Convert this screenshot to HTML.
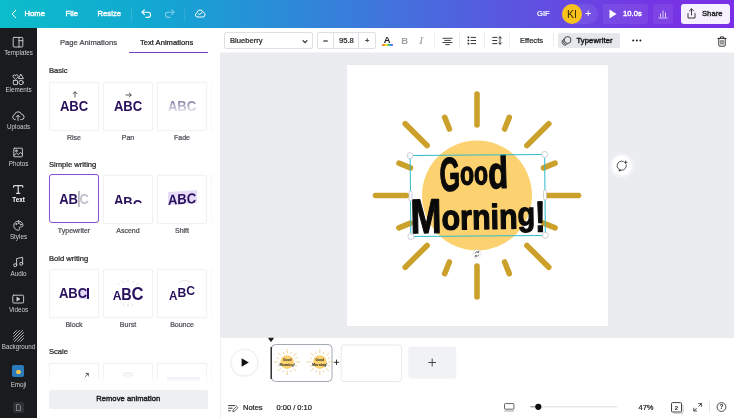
<!DOCTYPE html>
<html lang="en">
<head>
<meta charset="utf-8">
<title>Good Morning - Text Animations</title>
<style>
*{box-sizing:border-box;margin:0;padding:0}
html,body{width:734px;height:418px;overflow:hidden;background:#fff}
body{font-family:"Liberation Sans","DejaVu Sans",sans-serif;position:relative;will-change:transform;color:#1c1c1e;-webkit-font-smoothing:antialiased}
.abs{position:absolute}
svg{position:absolute;overflow:visible}
/* header */
#hdr{left:0;top:0;width:734px;height:28px;background:linear-gradient(90deg,#0bbdca 0%,#13a6d2 22%,#3a7cdb 48%,#5b55e0 70%,#7436e4 88%,#7a2fe6 100%)}
#hdr .t{position:absolute;color:#fff;font-size:7.600px;font-weight:normal;-webkit-text-stroke:.4px currentColor;letter-spacing:.05px;top:9px;line-height:10px;white-space:nowrap}
/* sidebar */
#side{left:0;top:28px;width:36.500px;height:390px;background:#1a1b1e}
#side .l{position:absolute;left:0;width:37px;text-align:center;color:#cfd0d3;font-size:6.300px;line-height:8px;white-space:nowrap}
/* panel */
#panel{left:37px;top:28px;width:183px;height:390px;background:#fff;overflow:hidden}
.tab{position:absolute;top:9.500px;font-size:7.6px;line-height:10px;white-space:nowrap;color:#44464c}
.h{position:absolute;left:12px;font-size:7.6px;line-height:10px;color:#1d1e22;white-space:nowrap}
.card{position:absolute;width:50px;height:49px;border:1px solid #f2f2f5;box-shadow:0 0 1.500px rgba(20,20,40,.05);border-radius:2px;background:#fff}
.card .ar{position:absolute;left:0;width:48px;text-align:center;top:7px;font-size:7px;line-height:8px;font-style:normal;color:#333;font-family:'DejaVu Sans','Liberation Sans',sans-serif}
.card b{position:absolute;left:0;width:48px;text-align:center;top:15.300px;font-size:14.500px;line-height:16px;color:#28105c;letter-spacing:-.1px;font-weight:bold;white-space:nowrap;transform:scaleX(.9)}
.lab{position:absolute;width:50px;text-align:center;font-size:7px;line-height:8px;color:#4b4d54;white-space:nowrap}
/* toolbar */
#tool{left:220px;top:28px;width:514px;height:24px;background:#fff}
.box{position:absolute;top:4px;height:16.500px;border:1px solid #dfe0e5;border-radius:2px;background:#fff}
.tt{position:absolute;font-size:7.600px;line-height:10px;top:7.500px;white-space:nowrap;color:#1d1e22}
.dv{position:absolute;top:5px;width:1px;height:14px;background:#ebecef}
/* stage */
#stage{left:220px;top:52px;width:514px;height:286px;background:#ebecf0;border-top:1px solid #f5f5f8}
#pagec{left:347px;top:65px;width:261px;height:260.500px;background:#fff;box-shadow:0 0 1.500px rgba(30,30,60,.04)}
/* bottom */
#tl{left:220px;top:338px;width:514px;height:80px;background:#fff}
.ft{position:absolute;font-size:7.5px;line-height:10px;top:403.200px;white-space:nowrap;color:#1d1e22}
.tt,.tab,.h,.ft,.lab{-webkit-text-stroke:.22px currentColor}
</style>
</head>
<body>

<!-- ================= HEADER ================= -->
<div id="hdr" class="abs">
  <svg style="left:11px;top:9px" width="6" height="10" viewBox="0 0 6 10"><path d="M4.800 1.200 L1.200 5 L4.800 8.800" fill="none" stroke="#fff" stroke-width="1" stroke-linecap="round" stroke-linejoin="round"/></svg>
  <span class="t" style="left:24.500px">Home</span>
  <span class="t" style="left:65.500px">File</span>
  <span class="t" style="left:97.500px">Resize</span>
  <div class="abs" style="left:131px;top:7px;width:1px;height:14px;background:rgba(255,255,255,.14)"></div>
  <!-- undo -->
  <svg style="left:141px;top:9px" width="11" height="9" viewBox="0 0 11 9"><path d="M3.4 0.8 L0.9 3.2 L3.4 5.6 M1 3.2 H7 a2.6 2.6 0 0 1 0 5.2 H5" fill="none" stroke="#fff" stroke-width="1.1" stroke-linecap="round" stroke-linejoin="round"/></svg>
  <!-- redo -->
  <svg style="left:164px;top:9px;opacity:.45" width="11" height="9" viewBox="0 0 11 9"><path d="M7.6 0.8 L10.1 3.2 L7.6 5.6 M10 3.2 H4 a2.6 2.6 0 0 0 0 5.2 H6" fill="none" stroke="#fff" stroke-width="1.1" stroke-linecap="round" stroke-linejoin="round"/></svg>
  <div class="abs" style="left:184px;top:7px;width:1px;height:14px;background:rgba(255,255,255,.10)"></div>
  <!-- cloud -->
  <svg style="left:194px;top:8px" width="12" height="10" viewBox="0 0 12 10"><path d="M3.2 9 H8.8 a2.4 2.4 0 0 0 .5 -4.7 a3.3 3.3 0 0 0 -6.4 .5 a2.2 2.2 0 0 0 .3 4.2 Z" fill="none" stroke="#fff" stroke-width="1"/><path d="M4.4 5.6 L5.6 6.8 L7.8 4.4" fill="none" stroke="#fff" stroke-width="1" stroke-linecap="round" stroke-linejoin="round"/></svg>

  <span class="t" style="left:537px;-webkit-text-stroke:.2px currentColor">GIF</span>
  <div class="abs" style="left:561px;top:4px;width:37px;height:20px;border-radius:10px;background:rgba(255,255,255,.08)"></div>
  <div class="abs" style="left:562px;top:4px;width:20px;height:20px;border-radius:10px;background:#f7c21b;color:#3a2a05;font-size:10.500px;line-height:20px;text-align:center">KI</div>
  <span class="t" style="left:585px;top:8px;font-size:11px;-webkit-text-stroke:0">+</span>
  <div class="abs" style="left:603px;top:4px;width:45px;height:20px;border-radius:3px;background:rgba(255,255,255,.07)"></div>
  <svg style="left:609px;top:9px" width="8" height="10" viewBox="0 0 8 10"><path d="M0.5 0.6 L7.5 5 L0.5 9.4 Z" fill="#fff"/></svg>
  <span class="t" style="left:623px">10.0s</span>
  <div class="abs" style="left:653px;top:4px;width:20px;height:20px;border-radius:3px;background:rgba(255,255,255,.07)"></div>
  <svg style="left:658px;top:9px" width="10" height="10" viewBox="0 0 10 10"><path d="M2.5 8 V4.5 M5 8 V1.5 M7.5 8 V3.5 M0.5 9 H9.5" fill="none" stroke="#e9defc" stroke-width="0.9"/></svg>
  <div class="abs" style="left:681px;top:4px;width:49px;height:20px;border-radius:3px;background:#f6f1fe"></div>
  <svg style="left:687px;top:8px" width="9" height="11" viewBox="0 0 9 11"><path d="M4.5 7 V1 M2.4 2.9 L4.5 0.8 L6.6 2.9 M1 5.5 V10 H8 V5.5" fill="none" stroke="#222" stroke-width="0.9" stroke-linecap="round" stroke-linejoin="round"/></svg>
  <span class="t" style="left:702px;color:#1f2024">Share</span>
</div>

<!-- ================= SIDEBAR ================= -->
<div id="side" class="abs">
  <svg style="left:0;top:0" width="37" height="390" viewBox="0 28 37 390" fill="none" stroke="#d6d7da" stroke-width="0.9" stroke-linecap="round" stroke-linejoin="round">
    <!-- templates -->
    <rect x="13.2" y="37.4" width="9.6" height="9.6" rx="0.8"/><path d="M19 37.400 V47 M19 40.700 H22.800"/>
    <!-- elements -->
    <path d="M15.6 75.4 c-.7 -1.2 -2.6 -.6 -2.6 .8 c0 1.300 1.7 2.300 2.600 3.100 c.9 -.8 2.600 -1.800 2.600 -3.100 c0 -1.400 -1.900 -2 -2.600 -.8z"/>
    <path d="M21.100 74.400 L23.400 78.600 H18.800 Z"/>
    <rect x="13.300" y="80.400" width="4.200" height="4.200" rx="0.500"/><circle cx="21.100" cy="82.500" r="2.200"/>
    <!-- uploads -->
    <path d="M15.400 119.600 H14.900 a2.500 2.500 0 0 1 -.3 -4.900 a3.600 3.600 0 0 1 7 -.3 a2.600 2.600 0 0 1 -.2 5.200 H20.600"/>
    <path d="M18 120.400 V115.400 M16.200 117 L18 115.200 L19.800 117"/>
    <!-- photos -->
    <rect x="13.800" y="148.200" width="8.600" height="8.600" rx="0.600"/><circle cx="16.300" cy="150.800" r="0.900"/><path d="M13.900 155.600 L16.600 153 L18.300 154.600 L20.400 152.300 L22.300 154.300"/>
    <!-- text -->
    <path d="M13.600 187.200 V185.700 H22.800 V187.200 M18.200 185.700 V193.300 M16.500 193.300 H19.900" stroke="#fff" stroke-width="1"/>
    <!-- styles -->
    <path d="M18.400 221 a4.600 4.600 0 1 0 0 9.200 c1.300 0 1.500 -1 1 -1.700 c-.5 -.8 0 -1.600 1 -1.600 h1 c1 0 1.600 -.6 1.600 -1.600 a4.500 4.500 0 0 0 -4.600 -4.300z"/><circle cx="16.200" cy="224" r="0.500"/><circle cx="18.600" cy="223" r="0.500"/><circle cx="20.800" cy="224.400" r="0.500"/>
    <!-- audio -->
    <path d="M16.600 265 V258.600 L22.600 257.300 V263.600"/><circle cx="15.200" cy="265.200" r="1.500"/><circle cx="21.200" cy="263.800" r="1.500"/>
    <!-- videos -->
    <rect x="12.800" y="295.200" width="10.800" height="7.800" rx="0.900"/><path d="M17 297.300 L20 299.100 L17 300.900 Z" fill="#d6d7da" stroke-width="0.500"/>
    <!-- background -->
    <path d="M13.500 333.500 L16.500 330.500 M13.500 336.500 L19.500 330.500 M13.500 339.500 L22.500 330.500 M14.500 341.500 L23.500 332.500 M17.500 341.500 L23.500 335.500 M20.500 341.500 L23.500 338.500" stroke-width="0.800"/>
  </svg>
  <div class="abs" style="left:12px;top:337.300px;width:12px;height:11.800px;border-radius:2px;background:#2b7bbb"></div>
  <div class="abs" style="left:15.500px;top:341.500px;width:5px;height:4px;border-radius:2px;background:#f3c64a"></div>
  <div class="abs" style="left:13px;top:373.500px;width:10.500px;height:11.500px;border-radius:2px;background:#2e3035"></div>
  <svg style="left:16px;top:376px" width="5" height="7" viewBox="0 0 5 7"><path d="M0.500 0.500 H3 L4.500 2 V6.500 H0.500 Z" fill="none" stroke="#9fa1a8" stroke-width="0.700"/></svg>
  <span class="l" style="top:21px">Templates</span>
  <span class="l" style="top:58px">Elements</span>
  <span class="l" style="top:94.500px">Uploads</span>
  <span class="l" style="top:131.500px">Photos</span>
  <span class="l" style="top:168px;color:#fff;font-weight:bold">Text</span>
  <span class="l" style="top:204.500px">Styles</span>
  <span class="l" style="top:241.500px">Audio</span>
  <span class="l" style="top:278px">Videos</span>
  <span class="l" style="top:315px">Background</span>
  <span class="l" style="top:352.800px">Emoji</span>
</div>

<!-- ================= PANEL ================= -->
<div id="panel" class="abs">
  <span class="tab" style="left:23px">Page Animations</span>
  <span class="tab" style="left:103px;color:#15161a">Text Animations</span>
  <div class="abs" style="left:92px;top:23.500px;width:79px;height:1.500px;background:#7a3fc4"></div>

  <span class="h" style="top:38px">Basic</span>
  <div class="card" style="left:12px;top:53.500px"><svg style="left:21.500px;top:8px" width="6" height="7" viewBox="0 0 6 7"><path d="M3 6.400 V0.800 M0.900 2.900 L3 0.700 L5.100 2.900" stroke="#2a2b30" stroke-width="0.800" fill="none"/></svg><b>ABC</b></div>
  <div class="card" style="left:66px;top:53.500px"><svg style="left:21px;top:9px" width="7" height="6" viewBox="0 0 7 6"><path d="M0.600 3 H6.200 M4.100 0.900 L6.300 3 L4.100 5.100" stroke="#2a2b30" stroke-width="0.800" fill="none"/></svg><b>ABC</b></div>
  <div class="card" style="left:120px;top:53.500px"><b>ABC</b><div class="abs" style="left:4px;top:15px;width:40px;height:20px;background:linear-gradient(180deg,rgba(255,255,255,.5) 22%,rgba(255,255,255,.97) 76%)"></div></div>
  <div class="card" style="left:174px;top:53.500px"></div>
  <span class="lab" style="left:12px;top:106px">Rise</span>
  <span class="lab" style="left:66px;top:106px">Pan</span>
  <span class="lab" style="left:120px;top:106px">Fade</span>

  <span class="h" style="top:132px">Simple writing</span>
  <div class="card" style="left:12px;top:146.300px;border:1.500px solid #8a4fd0;border-radius:3px"><b style="left:-.5px;top:15.500px">AB<span style="color:#c4c2cd;border-left:.7px solid #6d6a78;margin-left:.6px;padding-left:.3px">C</span></b></div>
  <div class="card" style="left:66px;top:146.800px"><div class="abs" style="left:0;top:0;width:48px;height:28.500px;overflow:hidden"><b><span style="position:relative;top:1px">A</span><span style="position:relative;top:3px">B</span><span style="position:relative;top:5.500px">C</span></b></div></div>
  <div class="card" style="left:120px;top:146.800px"><div class="abs" style="left:10px;top:15.500px;width:29px;height:13px;background:#e6dcf8;transform:skewY(-4deg)"></div><b style="transform:skewY(-4deg) scaleX(.9);top:15px">ABC</b></div>
  <div class="card" style="left:174px;top:146.800px"></div>
  <span class="lab" style="left:12px;top:199px">Typewriter</span>
  <span class="lab" style="left:66px;top:199px">Ascend</span>
  <span class="lab" style="left:120px;top:199px">Shift</span>

  <span class="h" style="top:225.500px">Bold writing</span>
  <div class="card" style="left:12px;top:240.800px"><div class="abs" style="left:29px;top:19px;width:8px;height:10px;background:#e3d8f8"></div><b style="left:-1px">ABC</b><div class="abs" style="left:36.500px;top:18.500px;width:2px;height:10.500px;background:#2c0b66"></div></div>
  <div class="card" style="left:66px;top:240.800px">
    <svg style="left:0;top:0" width="48" height="47" viewBox="0 0 48 47"><path d="M24 9 V12 M18 10.500 L19.500 13 M30 10.500 L28.500 13 M13.500 13.500 L15.500 15 M34.500 13.500 L32.500 15 M24 37 V34 M19 35.500 L20 33.500 M29 35.500 L28 33.500" stroke="#c9c8d2" stroke-width="0.600" fill="none"/></svg>
    <b style="top:16.500px;letter-spacing:-.2px"><span style="font-size:13.500px">A</span><span style="font-size:16px">B</span><span style="font-size:18.500px">C</span></b></div>
  <div class="card" style="left:120px;top:240.800px">
    <svg style="left:0;top:0" width="48" height="47" viewBox="0 0 48 47"><path d="M21 12.500 Q27 8.500 33.500 12.500" stroke="#b8a98a" stroke-width="0.700" stroke-dasharray="0.800 1.200" fill="none"/></svg>
    <b style="letter-spacing:0"><span style="position:relative;top:2px;font-size:13px">A</span><span style="position:relative;top:-1.500px;font-size:13.500px">B</span><span style="position:relative;top:-3.500px;font-size:13.500px">C</span></b></div>
  <div class="card" style="left:174px;top:240.800px"></div>
  <span class="lab" style="left:12px;top:293px">Block</span>
  <span class="lab" style="left:66px;top:293px">Burst</span>
  <span class="lab" style="left:120px;top:293px">Bounce</span>

  <span class="h" style="top:319px">Scale</span>
  <div class="card" style="left:12px;top:334.500px"><svg style="left:33.500px;top:9.500px" width="5" height="5" viewBox="0 0 5 5"><path d="M0.600 4.400 L4.300 0.700 M1.600 0.600 H4.400 V3.400" stroke="#222" stroke-width="0.800" fill="none"/></svg></div>
  <div class="card" style="left:66px;top:334.500px"><svg style="left:17px;top:7.500px" width="14" height="8" viewBox="0 0 14 8"><path d="M2 3 Q7 0 12 3 M1 5 Q7 2.500 13 5 M3 6.500 Q7 5 11 6.500" stroke="#dedde4" stroke-width="0.700" fill="none"/></svg></div>
  <div class="card" style="left:120px;top:334.500px"><div class="abs" style="left:9px;top:13.500px;width:33px;height:4px;background:#ece6f7"></div></div>
  <div class="card" style="left:174px;top:334.500px"></div>

  <div class="abs" style="left:0;top:345px;width:183px;height:11px;background:linear-gradient(180deg,rgba(255,255,255,0),#fff)"></div>
  <div class="abs" style="left:0;top:356px;width:183px;height:34px;background:#fff"></div>
  <div class="abs" style="left:11.500px;top:362.300px;width:159.500px;height:18.800px;border-radius:2px;background:#eeeff2;font-size:7.600px;line-height:18.800px;text-align:center;color:#1b1c21;-webkit-text-stroke:.42px currentColor;letter-spacing:.05px">Remove animation</div>
  <div class="abs" style="left:169px;top:25px;width:14px;height:330px;background:linear-gradient(90deg,rgba(255,255,255,0),rgba(255,255,255,.85) 70%,#fff)"></div>
</div>

<!-- ================= TOOLBAR ================= -->
<div id="tool" class="abs">
  <div class="box" style="left:4px;width:89px"></div>
  <span class="tt" style="left:10px">Blueberry</span>
  <svg style="left:82.300px;top:11.500px" width="6" height="4" viewBox="0 0 6 4"><path d="M1 0.700 L3 2.700 L5 0.700" fill="none" stroke="#222" stroke-width="1.100" stroke-linecap="round" stroke-linejoin="round"/></svg>
  <div class="box" style="left:97px;width:59px"></div>
  <div class="abs" style="left:113px;top:4px;width:1px;height:16.500px;background:#dfe0e5"></div>
  <div class="abs" style="left:138px;top:4px;width:1px;height:16.500px;background:#dfe0e5"></div>
  <svg style="left:102.500px;top:11.500px" width="5" height="2" viewBox="0 0 5 2"><path d="M0.300 1 H4.700" stroke="#1d1e22" stroke-width="1.100"/></svg>
  <span class="tt" style="left:119px">95.8</span>
  <span class="tt" style="left:145px">+</span>
  <!-- text colour -->
  <span class="tt" style="left:163.700px;top:6.700px;font-size:9.300px;font-weight:bold;-webkit-text-stroke:0">A</span>
  <div class="abs" style="left:162px;top:16.300px;width:11px;height:2px;border-radius:1px;background:linear-gradient(90deg,#e8453c,#f5a623,#f8e71c,#3cc86b,#2a9df4,#7d2ae8)"></div>
  <span class="tt" style="left:181.300px;font-size:9.500px;font-weight:bold;color:#a0a1a7;-webkit-text-stroke:0">B</span>
  <span class="tt" style="left:199.500px;font-size:10px;font-style:italic;color:#a0a1a7;font-family:'Liberation Serif',serif">I</span>
  <div class="dv" style="left:214px"></div>
  <svg style="left:221.500px;top:8.600px" width="11" height="9" viewBox="0 0 12 9"><path d="M0.5 1 H11.5 M2.5 3.3 H9.5 M0.5 5.6 H11.5 M3.5 7.9 H8.5" stroke="#1d1e22" stroke-width="0.9" fill="none"/></svg>
  <div class="dv" style="left:239px"></div>
  <svg style="left:247px;top:8px" width="10" height="9" viewBox="0 0 10 9"><path d="M3.6 1.4 H9 M3.6 4.5 H9 M3.6 7.6 H9" stroke="#1d1e22" stroke-width="0.9" fill="none"/><path d="M0.6 0.6h1.6v1.6h-1.6z M0.6 3.7h1.6v1.6h-1.6z M0.6 6.8h1.6v1.6h-1.6z" fill="#1d1e22"/></svg>
  <div class="dv" style="left:264px"></div>
  <svg style="left:272px;top:8px" width="10" height="9" viewBox="0 0 10 9"><path d="M0.3 1.4 H5.2 M0.3 4.5 H5.2 M0.3 7.6 H5.2" stroke="#1d1e22" stroke-width="0.9" fill="none"/><path d="M8 0.8 V8.2 M6.6 2.2 L8 0.7 L9.4 2.2 M6.6 6.8 L8 8.3 L9.4 6.8" stroke="#1d1e22" stroke-width="0.8" fill="none" stroke-linecap="round" stroke-linejoin="round"/></svg>
  <div class="dv" style="left:289px"></div>
  <span class="tt" style="left:300px">Effects</span>
  <div class="dv" style="left:333px"></div>
  <div class="abs" style="left:338px;top:5px;width:62px;height:15px;border-radius:2px;background:#e6e7eb"></div>
  <svg style="left:341px;top:7.5px" width="11" height="10" viewBox="0 0 11 10"><circle cx="6.6" cy="4" r="3.4" fill="#e6e7eb" stroke="#1d1e22" stroke-width="0.8"/><path d="M2.6 3.1 A3.4 3.4 0 0 0 6 8.4 M1.2 4.6 A3.4 3.4 0 0 0 4.4 9.4" fill="none" stroke="#1d1e22" stroke-width="0.7" stroke-linecap="round"/></svg>
  <span class="tt" style="left:356.500px;letter-spacing:.12px;color:#1b1c20;-webkit-text-stroke:.45px currentColor">Typewriter</span>
  <svg style="left:412px;top:11px" width="10" height="3" viewBox="0 0 10 3"><circle cx="1.200" cy="1.500" r="1" fill="#1d1e22"/><circle cx="4.800" cy="1.500" r="1" fill="#1d1e22"/><circle cx="8.400" cy="1.500" r="1" fill="#1d1e22"/></svg>
  <!-- trash -->
  <svg style="left:497px;top:7.500px" width="10" height="11" viewBox="0 0 10 11"><path d="M0.8 2.4 H9.2 M3.4 2.2 V0.9 H6.6 V2.2 M1.8 2.6 V9.4 a0.8 0.8 0 0 0 .8 .8 H7.4 a0.8 0.8 0 0 0 .8 -.8 V2.6 M4 4.4 V8.2 M6 4.4 V8.2" fill="none" stroke="#1d1e22" stroke-width="0.9" stroke-linecap="round" stroke-linejoin="round"/></svg>
</div>

<!-- ================= STAGE ================= -->
<div id="stage" class="abs"></div>
<div id="pagec" class="abs"></div>
<svg id="art" style="left:0;top:0" width="734" height="418" viewBox="0 0 734 418">
  <circle cx="477" cy="195.5" r="55" fill="#fcd270"/>
  <path d="M477.0 125.0L477.0 94.0M504.6 129.0L509.3 117.4M526.9 145.6L548.8 123.7M543.5 167.9L555.1 163.2M547.5 195.5L578.5 195.5M543.5 223.1L555.1 227.8M526.9 245.4L548.8 267.3M504.6 262.0L509.3 273.6M477.0 266.0L477.0 297.0M449.4 262.0L444.7 273.6M427.1 245.4L405.2 267.3M410.5 223.1L398.9 227.8M406.5 195.5L375.5 195.5M410.5 167.9L398.9 163.2M427.1 145.6L405.2 123.7M449.4 129.0L444.7 117.4" stroke="#cba12c" stroke-width="5.600" stroke-linecap="round" fill="none"/>
  <g font-family="'Liberation Sans','DejaVu Sans',sans-serif" font-weight="bold" fill="#0a0a0a" stroke="#0a0a0a" stroke-width="1.300" stroke-linejoin="round">
    <text x="439.500" y="190" font-size="47.500" transform="rotate(-1.500 474 172)"><tspan textLength="20.500" lengthAdjust="spacingAndGlyphs">G</tspan><tspan font-size="33" dy="-5.500" textLength="28" lengthAdjust="spacingAndGlyphs">oo</tspan><tspan font-size="45" dy="4" textLength="20" lengthAdjust="spacingAndGlyphs">d</tspan></text>
    <text x="410.500" y="232.200" font-size="48.500" transform="rotate(-1 478 215)"><tspan textLength="31" lengthAdjust="spacingAndGlyphs">M</tspan><tspan font-size="35" dy="-3" textLength="76" lengthAdjust="spacingAndGlyphs">ornin</tspan><tspan font-size="33" dy="-3" textLength="17.500" lengthAdjust="spacingAndGlyphs">g</tspan><tspan font-size="43.500" dy="6.500" textLength="10.500" lengthAdjust="spacingAndGlyphs">!</tspan></text>
  </g>
  <!-- selection -->
  <g transform="rotate(-0.5 478 195.5)">
    <rect x="410.5" y="155" width="134.5" height="81" fill="none" stroke="#2fbccb" stroke-width="1"/>
    <g fill="#fff" stroke="#b9bcc4" stroke-width="0.7">
      <circle cx="410.5" cy="155" r="3"/><circle cx="545" cy="155" r="3"/>
      <circle cx="410.5" cy="236" r="3"/><circle cx="545" cy="236" r="3"/>
      <rect x="409" y="190.5" width="3" height="10" rx="1.5"/><rect x="543.5" y="190.5" width="3" height="10" rx="1.5"/>
    </g>
  </g>
  <circle cx="477" cy="254" r="4.2" fill="#fff" stroke="#d4d6dc" stroke-width="0.6"/>
  <path d="M475.2 253.2 a2 2 0 0 1 3.4 -0.9 M478.8 254.8 a2 2 0 0 1 -3.4 0.9 M478.7 251.2 v1.2 h-1.2 M475.3 256.8 v-1.2 h1.2" fill="none" stroke="#333" stroke-width="0.6" stroke-linecap="round"/>
  <!-- comment button -->
  <circle cx="621.800" cy="165.600" r="12.500" fill="#f1f2f5"/>
  <circle cx="621.800" cy="165.600" r="10" fill="#fff"/>
  <path d="M623.300 161.300 a4.600 4.600 0 1 0 3 3.600 M619.600 169.600 l-0.700 1.500 l2 -0.700" fill="none" stroke="#2a2b30" stroke-width="0.800" stroke-linecap="round" stroke-linejoin="round"/>
  <path d="M625.700 160.900 v2.800 M624.300 162.300 h2.800" fill="none" stroke="#2a2b30" stroke-width="0.800" stroke-linecap="round"/>
</svg>

<!-- ================= TIMELINE ================= -->
<div id="tl" class="abs"></div>
<div class="abs" style="left:219.500px;top:338px;width:1px;height:80px;background:#f1f1f4"></div>
<svg id="tls" style="left:0;top:0" width="734" height="418" viewBox="0 0 734 418">
  <!-- play -->
  <circle cx="244.500" cy="363" r="14.500" fill="#f6f6f8"/><circle cx="244.500" cy="362.500" r="13.300" fill="#fff" stroke="#ebebef" stroke-width="0.800"/>
  <path d="M241.6 358.3 L248.8 362.5 L241.6 366.7 Z" fill="#111"/>
  <!-- playhead -->
  <path d="M268.600 338.200 H273.400 L271 341.600 Z" fill="#111" stroke="#111" stroke-width="0.800" stroke-linejoin="round"/>
  <!-- thumbs -->
  <rect x="271.500" y="344.500" width="60.500" height="37" rx="4" fill="#fff" stroke="#a4a8b3" stroke-width="1"/>
  <path d="M271.200 347 V379" stroke="#25262b" stroke-width="1.400"/>
  <g transform="translate(287.200 362) scale(0.125)">
    <circle r="55" fill="#fcd270"/><path d="M0 -72L0 -102M28 -67L32 -78M51 -51L72 -72M67 -28L78 -32M72 0L102 0M67 28L78 32M51 51L72 72M28 67L32 78M0 72L0 102M-28 67L-32 78M-51 51L-72 72M-67 28L-78 32M-72 0L-102 0M-67 -28L-78 -32M-51 -51L-72 -72M-28 -67L-32 -78" stroke="#d9b654" stroke-width="4.500" stroke-linecap="round" fill="none"/>
  </g>
  <g transform="translate(319.800 362) scale(0.125)">
    <circle r="55" fill="#fcd270"/><path d="M0 -72L0 -102M28 -67L32 -78M51 -51L72 -72M67 -28L78 -32M72 0L102 0M67 28L78 32M51 51L72 72M28 67L32 78M0 72L0 102M-28 67L-32 78M-51 51L-72 72M-67 28L-78 32M-72 0L-102 0M-67 -28L-78 -32M-51 -51L-72 -72M-28 -67L-32 -78" stroke="#d9b654" stroke-width="4.500" stroke-linecap="round" fill="none"/>
  </g>
  <g font-family="'Liberation Sans','DejaVu Sans',sans-serif" font-weight="bold" fill="#1a1a1a" font-size="4.200" text-anchor="middle">
    <text x="287.2" y="361.3" textLength="8.5" lengthAdjust="spacingAndGlyphs">Good</text>
    <text x="287.2" y="366.2" textLength="15.5" lengthAdjust="spacingAndGlyphs">Morning!</text>
    <text x="319.800" y="361.300" textLength="8.5" lengthAdjust="spacingAndGlyphs">Good</text>
    <text x="319.800" y="366.200" textLength="15.5" lengthAdjust="spacingAndGlyphs">Morning!</text>
  </g>
  <path d="M333.8 362.3 H339.2 M336.5 359.6 V365" stroke="#222" stroke-width="0.9"/>
  <rect x="341.200" y="345" width="60.500" height="36.500" rx="3" fill="#fff" stroke="#e8e9ed" stroke-width="1"/>
  <rect x="408.300" y="346.500" width="48" height="32" rx="3" fill="#f1f2f5"/>
  <path d="M428.3 362.5 H436.1 M432.2 358.6 V366.4" stroke="#33343a" stroke-width="0.9"/>
  <!-- footer icons -->
  <path d="M228.200 405.600 H235.400 M228.200 408.200 H232.600 M228.200 410.800 H230.800" stroke="#222" stroke-width="0.900" fill="none"/>
  <path d="M232.800 411.800 L233.300 409.700 L236.600 406.300 L238 407.700 L234.700 411.100 Z" fill="#fff" stroke="#222" stroke-width="0.700"/>
  <rect x="504.5" y="403.6" width="9.4" height="5.6" rx="0.8" fill="none" stroke="#3a3b40" stroke-width="0.8"/>
  <path d="M504.3 411 H514.1" stroke="#9a9ba2" stroke-width="0.9"/>
  <path d="M530.5 406.8 H617" stroke="#dcdde2" stroke-width="1"/>
  <path d="M530.500 406.800 H538" stroke="#8f9096" stroke-width="1"/>
  <circle cx="538.3" cy="406.8" r="3.1" fill="#0e0f12"/>
  <rect x="671.5" y="402.6" width="10" height="9.4" rx="1" fill="#fff" stroke="#2c2d32" stroke-width="0.9"/>
  <path d="M683 404.5 V413.3 H673.5" stroke="#b9bac0" stroke-width="0.8" fill="none"/>
  <text x="676.5" y="409.9" font-size="6" font-weight="bold" text-anchor="middle" fill="#222" font-family="'Liberation Sans',sans-serif">2</text>
  <path d="M698.6 403.6 H701.4 V406.4 M701.2 403.8 L698.9 406.1 M696.6 411 H693.8 V408.2 M694 410.8 L696.3 408.5" stroke="#222" stroke-width="0.8" fill="none" stroke-linecap="round" stroke-linejoin="round"/>
  <path d="M709.5 401.5 V412.5" stroke="#e3e4e8" stroke-width="1"/>
  <circle cx="721.5" cy="407" r="4.4" fill="none" stroke="#222" stroke-width="0.8"/>
  <text x="721.5" y="409.3" font-size="6.4" font-weight="bold" text-anchor="middle" fill="#222" font-family="'Liberation Sans',sans-serif">?</text>
</svg>
<span class="ft" style="left:243px">Notes</span>
<span class="ft" style="left:276.5px">0:00 / 0:10</span>
<span class="ft" style="left:638.5px">47%</span>

</body>
</html>
